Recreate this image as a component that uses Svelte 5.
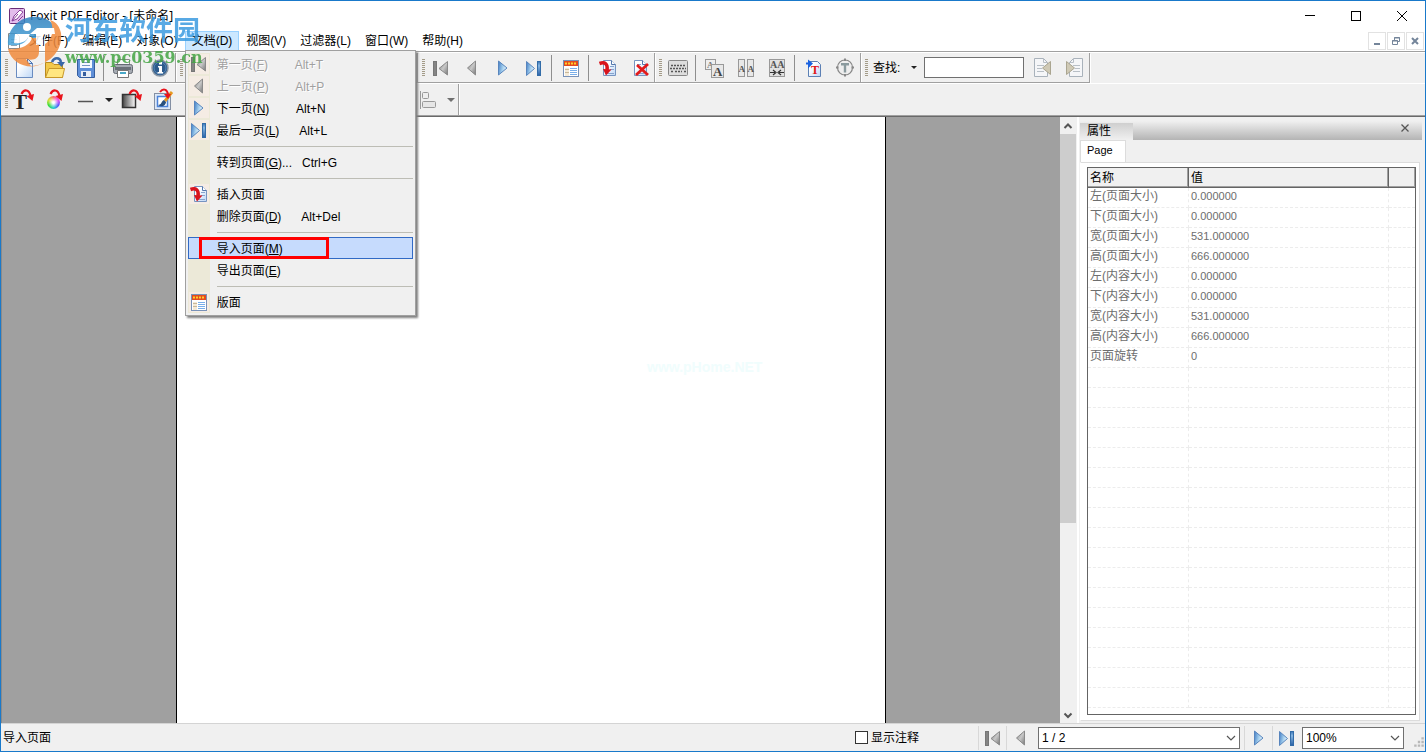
<script>
  const menus = [
    ['文件', 'F'], ['编辑', 'E'], ['对象', 'O'], ['文档', 'D'],
    ['视图', 'V'], ['过滤器', 'L'], ['窗口', 'W'], ['帮助', 'H']
  ];
  const items = [
    { t: '第一页', k: 'F', s: '        Alt+T', icon: 'firstG', off: true },
    { t: '上一页', k: 'P', s: '        Alt+P', icon: 'prevG', off: true },
    { t: '下一页', k: 'N', s: '        Alt+N', icon: 'next' },
    { t: '最后一页', k: 'L', s: '      Alt+L', icon: 'last' },
    null,
    { t: '转到页面', k: 'G', s: '...   Ctrl+G' },
    null,
    { t: '插入页面', icon: 'insert' },
    { t: '删除页面', k: 'D', s: '      Alt+Del' },
    null,
    { t: '导入页面', k: 'M', hot: true },
    { t: '导出页面', k: 'E' },
    null,
    { t: '版面', icon: 'layout' }
  ];
  const props = [
    ['左(页面大小)', '0.000000'], ['下(页面大小)', '0.000000'],
    ['宽(页面大小)', '531.000000'], ['高(页面大小)', '666.000000'],
    ['左(内容大小)', '0.000000'], ['下(内容大小)', '0.000000'],
    ['宽(内容大小)', '531.000000'], ['高(内容大小)', '666.000000'],
    ['页面旋转', '0'],
    ...Array.from({ length: 17 }, () => ['', ''])
  ];
  let notes = $state(false);
  let query = $state('');
</script>

{#snippet redArrow()}
  <path d="M9.500 6C12 1 17 1 18.500 8" fill="none" stroke="#e8141c" stroke-width="2.200" />
  <path d="M14.500 8L22 6L20.500 13Z" fill="#e8141c" />
{/snippet}

{#snippet icon(name)}
  <svg class="ic" viewBox="0 0 24 24" aria-hidden="true">
    {#if name === 'new'}
      <path d="M4.500 2.500H15.500L20.500 7.500V21.500H4.500Z" fill="url(#paper)" stroke="#6a8cc0" />
      <path d="M15.500 2.500V7.500H20.500Z" fill="#d5e5fa" stroke="#4a74b4" />
    {:else if name === 'open'}
      <path d="M2.500 6.500H9L11 8.500H19.500V21.500H2.500Z" fill="#f2c84a" stroke="#b98a20" />
      <path d="M2.500 21.500L6 12.500H21.500L19.500 21.500Z" fill="#ffe680" stroke="#c8982a" />
      <path d="M9 6C11 1 17 1 18 6" fill="none" stroke="#3a68a8" stroke-width="2.500" />
      <path d="M14 6H22L18.500 11Z" fill="#3a68a8" />
    {:else if name === 'save'}
      <path d="M3.500 3.500H20.500V21.500H5.500L3.500 19.500Z" fill="#5f8fd8" stroke="#365e9e" />
      <rect x="6" y="4" width="12" height="8" fill="#f4f8ff" />
      <path d="M8 6.500H16M8 9.500H16" stroke="#7795c4" />
      <rect x="7" y="15" width="10" height="6" fill="#e9eef6" />
      <rect x="9" y="16" width="3" height="4" fill="#365e9e" />
    {:else if name === 'print'}
      <path d="M6.500 9V3.500H18.500V9" fill="#f8f8f8" stroke="#888" />
      <rect x="2.500" y="8.500" width="19" height="9" rx="2" fill="#a5aab2" stroke="#656b74" />
      <rect x="4" y="11" width="16" height="3" fill="#6a7078" />
      <path d="M6.500 14.500H17.500V21.500H6.500Z" fill="#fff" stroke="#777" />
      <rect x="9" y="16" width="6" height="2" fill="#49a8c8" />
    {:else if name === 'info'}
      <circle cx="12" cy="12" r="8" fill="#2d5a8c" stroke="#8a97a5" stroke-width="1.500" />
      <circle cx="12" cy="12" r="6" fill="none" stroke="#5687b7" />
      <path d="M11 6H14V8.500H11ZM10 10H14V16H15V17.500H9.500V16H11V11.500H10Z" fill="#fff" />
    {:else if name === 'firstG'}
      <rect x="4.500" y="5.500" width="3" height="14" fill="#858585" stroke="#777" />
      <path d="M18.500 5.500V19L10 12.500Z" fill="url(#grey)" stroke="#8a8a8a" />
    {:else if name === 'prevG'}
      <path d="M15.500 5V19L7.500 12Z" fill="url(#grey)" stroke="#8a8a8a" />
    {:else if name === 'next'}
      <path d="M7.500 5V19L16 12Z" fill="url(#blue)" stroke="#5885bd" />
    {:else if name === 'last'}
      <path d="M4.500 5.500V19.500L12.500 12.500Z" fill="url(#blue)" stroke="#5885bd" />
      <rect x="15.500" y="5.500" width="3" height="14" fill="url(#bar)" stroke="#326ca8" />
    {:else if name === 'layout'}
      <rect x="4.500" y="4.500" width="15" height="16" fill="#fff" stroke="#7992b8" />
      <rect x="5" y="5" width="14" height="5" fill="#e34a1e" />
      <path d="M6 7.500H18" stroke="#ffd02a" stroke-width="2" stroke-dasharray="2 1" />
      <rect x="6" y="12" width="4" height="8" fill="#f4ead8" />
      <path d="M6 13.500H10M6 16.500H10" stroke="#c9b99a" />
      <path d="M11 12.500H18M11 14.500H18M11 16.500H18M11 18.500H18" stroke="#78aeea" />
    {:else if name === 'insert' || name === 'delete'}
      <path d="M7.500 4.500H15.500L19.500 8.500V19.500H7.500Z" fill="url(#paper)" stroke="#7694c0" />
      <path d="M15.500 4.500V8.500H19.500" fill="#fff" stroke="#5478ac" />
      {#if name === 'insert'}
        <path d="M14 10.500H18M14 13.500H18M9 17.500H18" stroke="#86a4ce" />
        <path d="M3.500 7.500C9 5.500 12 8 11 14" fill="none" stroke="#d8141c" stroke-width="3.500" />
        <path d="M7 13L15.500 13.500L10 19.500Z" fill="#d8141c" />
      {:else}
        <path d="M10 8.500H14M10 17.500H17" stroke="#86a4ce" />
        <path d="M10 9L21 19M21 8L9 19" stroke="#e31b1b" stroke-width="2.800" />
      {/if}
    {:else if name === 'keys'}
      <rect x="2.500" y="4.500" width="19" height="15" rx="1" fill="#ddd" stroke="#888" />
      <path d="M5 9.500H19M4 12.500H20M5 15.500H7M9 15.500H16M18 15.500H20" stroke="#555" stroke-width="1.500" stroke-dasharray="2 1" />
    {:else if name === 'aaStep'}
      <rect x="2.500" y="3.500" width="10" height="10" fill="#eee" stroke="#999" />
      <text x="4" y="12" font-size="9" fill="#777">A</text>
      <rect x="8.500" y="8.500" width="12" height="13" fill="#e8e8e8" stroke="#999" />
      <text x="10" y="20" font-size="13" fill="#444">A</text>
    {:else if name === 'aaSplit'}
      <rect x="4.500" y="3.500" width="6" height="17" fill="#e8e8e8" stroke="#999" />
      <rect x="13.500" y="3.500" width="6" height="17" fill="#e8e8e8" stroke="#999" />
      <text x="4.500" y="16" font-size="9" fill="#555">A</text>
      <text x="13.500" y="16" font-size="9" fill="#555">A</text>
    {:else if name === 'aaMerge'}
      <rect x="4.500" y="3.500" width="15" height="17" fill="#e0e0e0" stroke="#999" />
      <text x="5" y="12" font-size="10" fill="#555">AA</text>
      <path d="M5 16.500H10M19 16.500H14M8 14L11 16.500L8 19M16 14L13 16.500L16 19" fill="none" stroke="#333" stroke-width="1.200" />
    {:else if name === 'pageT'}
      <path d="M6.500 5.500H15.500L18.500 8.500V20.500H6.500Z" fill="url(#paper)" stroke="#5c80b4" />
      <path d="M4 7.500H8M7 5.500L9.500 7.500L7 10Z" fill="#1a62e0" stroke="#1a62e0" stroke-width="2" />
      <text x="9" y="18" font-size="12" fill="#e01616">T</text>
    {:else if name === 'circleT'}
      <circle cx="12" cy="11.500" r="7.500" fill="#eee" stroke="#888" stroke-width="1.200" />
      <path d="M12 2.500V5M12 18V20.500M3 11.500H5.500M18.500 11.500H21" stroke="#888" stroke-width="2" />
      <path d="M8 7H16V9.500H13.200V16.500H10.800V9.500H8Z" fill="#8a9a9e" />
    {:else if name === 'findPrev' || name === 'findNext'}
      <g transform={name === 'findNext' ? 'translate(24 0) scale(-1 1)' : undefined}>
        <path d="M3.500 2.500H12.500L16.500 6.500V20.500H3.500Z" fill="#f5f6f8" stroke="#a9b2bb" />
        <path d="M12.500 2.500V6.500H16.500M6 9.500H13M6 12.500H11M6 15.500H13" fill="none" stroke="#b8bfc6" />
        <path d="M19.500 5.500V18.500L11.500 12Z" fill="#cfc9b5" stroke="#aaa590" />
      </g>
    {:else if name === 'text'}
      <text x="1" y="21" font-size="21" fill="#222">T</text>
      {@render redArrow()}
    {:else if name === 'align'}
      <path d="M4.500 3V21" stroke="#999" />
      <rect x="6.500" y="4.500" width="6" height="6" rx="1" fill="#eee" stroke="#999" />
      <rect x="6.500" y="13.500" width="13" height="6" rx="1" fill="#e6e6e6" stroke="#999" />
    {:else if name === 'line'}
      <path d="M4 13.500H19" stroke="#555" stroke-width="1.500" />
    {:else if name === 'gradient'}
      <rect x="2.500" y="6.500" width="13" height="13" fill="url(#fade)" stroke="#333" stroke-width="1.500" />
      {@render redArrow()}
    {:else if name === 'image'}
      <rect x="3.500" y="5.500" width="16" height="16" fill="#dce8f8" stroke="#8490a4" />
      <rect x="6.500" y="8.500" width="10" height="10" fill="#fff" stroke="#4c83d8" stroke-width="1.500" />
      <path d="M21 4L14 13" stroke="#e49a22" stroke-width="3" />
      <path d="M13 12C10 13 11 17 7 17C11 20 15 17 15 14Z" fill="#28507e" />
      <path d="M9 4C12 0 16 1 17 6" fill="none" stroke="#e8141c" stroke-width="2" />
      <path d="M13 6H20L17 11Z" fill="#e8141c" />
    {/if}
  </svg>
{/snippet}

{#snippet tool(name, label)}
  <button class="tool" aria-label={label}>
    {#if name === 'color'}
      <span class="wheel"></span>
      <svg class="ic over" viewBox="0 0 24 24" aria-hidden="true">{@render redArrow()}</svg>
    {:else}
      {@render icon(name)}
    {/if}
  </button>
{/snippet}

<svg class="defs" aria-hidden="true">
  <defs>
    <linearGradient id="paper" x1="0" y1="0" x2="1" y2="1"><stop offset="0.300" stop-color="#fff" /><stop offset="1" stop-color="#bcd6f6" /></linearGradient>
    <linearGradient id="grey" x1="0" y1="0" x2="1" y2="1"><stop offset="0" stop-color="#777" /><stop offset="0.500" stop-color="#c8c8c8" /><stop offset="1" stop-color="#777" /></linearGradient>
    <linearGradient id="blue" x1="0" y1="0" x2="1" y2="0.300"><stop offset="0" stop-color="#3f7cc4" /><stop offset="0.600" stop-color="#a6d0ee" /><stop offset="1" stop-color="#e2f2fc" /></linearGradient>
    <linearGradient id="bar" x1="0" y1="0" x2="0" y2="1"><stop offset="0" stop-color="#3b74b6" /><stop offset="0.300" stop-color="#86b6e2" /><stop offset="1" stop-color="#2a60a6" /></linearGradient>
    <linearGradient id="fade"><stop offset="0" stop-color="#444" /><stop offset="1" stop-color="#fff" /></linearGradient>
    <linearGradient id="sky" x1="0" y1="0" x2="0" y2="1"><stop offset="0" stop-color="#2f80bd" /><stop offset="1" stop-color="#48a8de" /></linearGradient>
  </defs>
</svg>

<div class="window">
  <header class="title">
    <svg class="app" viewBox="0 0 16 16" aria-hidden="true">
      <rect x=".5" y=".5" width="15" height="15" rx="1" fill="#e3bdec" stroke="#6a2d78" />
      <path d="M3 13L5 8L11 2L14 4L8 11Z" fill="#fff" stroke="#8a3f9c" />
      <path d="M3 13L9 6M9 13L14 8" stroke="#8a3f9c" />
    </svg>
    <span class="name">Foxit PDF Editor - [未命名]</span>
    <button class="win" aria-label="最小化"><svg viewBox="0 0 12 12"><path d="M1 5.500H11" stroke="#000" /></svg></button>
    <button class="win" aria-label="最大化"><svg viewBox="0 0 12 12"><rect x="1.500" y="1.500" width="9" height="9" fill="none" stroke="#000" /></svg></button>
    <button class="win" aria-label="关闭"><svg viewBox="0 0 12 12"><path d="M1 1L11 11M11 1L1 11" stroke="#000" /></svg></button>
  </header>

  <nav class="menubar">
    <svg class="doc" viewBox="0 0 16 16" aria-hidden="true"><path d="M2.500 .5H10.500L13.500 3.500V15.500H2.500Z" fill="#fff" stroke="#888" /><path d="M5 6.500H11M5 9.500H11M5 12.500H11" stroke="#aaa" /></svg>
    {#each menus as [t, k]}
      <div class="entry">
        <button class="top" class:open={k === 'D'}>{t}({k})</button>
        {#if k === 'D'}
          <div class="drop" role="menu">
            {#each items as it}
              {#if it}
                <button class="item" class:hot={it.hot} role="menuitem" disabled={it.off}>
                  <span class="gut">{#if it.icon}<span class="chip">{@render icon(it.icon)}</span>{/if}</span>
                  <span class="lab">{it.t}{#if it.k}(<u>{it.k}</u>){/if}{it.s ?? ''}</span>
                  {#if it.hot}<i class="mark"></i>{/if}
                </button>
              {:else}
                <div class="rule" role="separator"></div>
              {/if}
            {/each}
          </div>
        {/if}
      </div>
    {/each}
    <div class="mdi">
      <button aria-label="最小化文档"><svg viewBox="0 0 10 10"><path d="M2 8H8" stroke="#74859a" stroke-width="2" /></svg></button>
      <button aria-label="还原文档"><svg viewBox="0 0 10 10"><path d="M1.500 4.500H6.500V8.500H1.500ZM3.500 4V1.500H8.500V5.500H7M1 5H7M3 2H9" fill="none" stroke="#74859a" /></svg></button>
      <button aria-label="关闭文档"><svg viewBox="0 0 10 10"><path d="M2 2L8 8M8 2L2 8" stroke="#74859a" stroke-width="2" /></svg></button>
    </div>
  </nav>

  <div class="tools">
    <div class="row">
      <div class="band">
        <i class="grip"></i>
        {@render tool('new', '新建')}{@render tool('open', '打开')}{@render tool('save', '保存')}
        <i class="sep"></i>{@render tool('print', '打印')}<i class="sep"></i>{@render tool('info', '信息')}
      </div>
      <div class="band covered"><i class="grip"></i></div>
      <div class="band">
        <i class="grip"></i>
        {@render tool('firstG', '第一页')}{@render tool('prevG', '上一页')}{@render tool('next', '下一页')}{@render tool('last', '最后一页')}
        <i class="sep"></i>{@render tool('layout', '版面')}<i class="sep"></i>
        {@render tool('insert', '插入页面')}{@render tool('delete', '删除页面')}
      </div>
      <div class="band">
        <i class="grip"></i>
        {@render tool('keys', '键盘')}<i class="sep"></i>
        {@render tool('aaStep', '文字')}{@render tool('aaSplit', '拆分')}{@render tool('aaMerge', '合并')}
        <i class="sep"></i>{@render tool('pageT', '导入文本')}{@render tool('circleT', '文本对象')}
      </div>
      <div class="band find">
        <i class="grip"></i>
        <label for="find">查找:</label>
        <button class="caret" aria-label="查找选项"></button>
        <input id="find" type="text" bind:value={query} />
        {@render tool('findPrev', '查找上一个')}{@render tool('findNext', '查找下一个')}
      </div>
    </div>
    <div class="row second">
      <div class="band">
        <i class="grip"></i>
        {@render tool('text', '添加文本')}{@render tool('color', '颜色')}{@render tool('line', '线型')}
        <button class="caret" aria-label="线型选项"></button>
        {@render tool('gradient', '渐变')}{@render tool('image', '图像')}
        <i class="hidden"></i>
        {@render tool('align', '对齐')}
        <button class="caret dim" aria-label="对齐选项"></button>
      </div>
    </div>
  </div>

  <main>
    <section class="canvas">
      <div class="sheet"><span class="faint">www.pHome.NET</span></div>
    </section>
    <div class="scroll">
      <button aria-label="向上滚动"><svg viewBox="0 0 10 10"><path d="M1.500 7L5 3.500L8.500 7" /></svg></button>
      <div class="track"><i></i></div>
      <button aria-label="向下滚动"><svg viewBox="0 0 10 10"><path d="M1.500 3.500L5 7L8.500 3.500" /></svg></button>
    </div>
    <aside>
      <div class="cap"><h2>属性</h2><button aria-label="关闭面板"><svg viewBox="0 0 10 10"><path d="M1.500 1.500L8.500 8.500M8.500 1.500L1.500 8.500" stroke="#555" stroke-width="1.300" /></svg></button></div>
      <div class="tabs"><button class="tab">Page</button></div>
      <div class="pane">
        <div class="grid">
          <table>
            <colgroup><col class="c1" /><col class="c2" /><col /></colgroup>
            <thead><tr><th>名称</th><th>值</th><th></th></tr></thead>
            <tbody>
              {#each props as [n, v]}
                <tr><td>{n}</td><td class="val">{v}</td><td></td></tr>
              {/each}
            </tbody>
          </table>
        </div>
      </div>
    </aside>
  </main>

  <footer>
    <span class="msg">导入页面</span>
    <label class="check"><input type="checkbox" bind:checked={notes} />显示注释</label>
    <button class="nav" aria-label="第一页">{@render icon('firstG')}</button>
    <button class="nav" aria-label="上一页">{@render icon('prevG')}</button>
    <div class="pick wide"><select aria-label="页码"><option>1 / 2</option><option>2 / 2</option></select><svg viewBox="0 0 10 10"><path d="M1 3L5 7L9 3" /></svg></div>
    <button class="nav" aria-label="下一页">{@render icon('next')}</button>
    <button class="nav" aria-label="最后一页">{@render icon('last')}</button>
    <div class="pick"><select aria-label="缩放"><option>100%</option><option>150%</option></select><svg viewBox="0 0 10 10"><path d="M1 3L5 7L9 3" /></svg></div>
    <svg class="size" viewBox="0 0 10 10" aria-hidden="true"><path d="M7 1h2v2h-2zM7 4h2v2h-2zM7 7h2v2h-2zM4 4h2v2h-2zM4 7h2v2h-2zM1 7h2v2h-2z" fill="#b8b8b8" /></svg>
  </footer>

  <div class="brand" aria-hidden="true">
    <svg viewBox="0 0 60 60">
      <path d="M3 36C2 16 20 4 38 9C46 11 51 18 53 24C47 19 39 17 35 24L33 41H27V28L23 27C23 32 17 38 3 36Z" fill="url(#sky)" />
      <path d="M3 40C16 41 25 36 27 29H34V43C34 50 28 52 21 50L26 57C44 56 58 42 56 24C54 15 49 12 45 11C50 20 47 31 40 35V53C28 62 7 57 3 40Z" fill="#f08a3c" />
      <path d="M10 25H25L22 30C20 33 14 35 9 34ZM32 19H49L50 25H38V36H31V25H25Z" fill="#fff" />
      <circle cx="22" cy="18" r="4" fill="#fff" />
    </svg>
    <div class="words"><b>河东软件园</b><em>www.pc0359.cn</em></div>
  </div>
</div>

<style>
  :global(body) { margin: 0; }
  .window, .window button, .window input, .window select {
    font-family: "Liberation Sans", "Noto Sans CJK SC", sans-serif;
    font-size: 12px;
    color: #000;
  }
  .window {
    position: relative;
    box-sizing: border-box;
    height: 100vh;
    display: flex;
    flex-direction: column;
    border: 1px solid #1979ca;
    background: #f0f0f0;
    line-height: 16px;
    overflow: hidden;
  }
  .window * { box-sizing: border-box; }
  .defs { position: absolute; width: 0; height: 0; }
  button { border: 0; padding: 0; background: none; }
  .ic { width: 24px; height: 24px; display: block; flex: none; }
  .ic text { font-family: "Liberation Serif", serif; font-weight: bold; }

  .title { display: flex; align-items: center; height: 29px; background: #fff; padding-left: 8px; flex: none; }
  .app { width: 16px; height: 16px; }
  .name { margin-left: 5px; flex: 1; font-family: "Noto Sans", "Noto Sans CJK SC", sans-serif; }
  .win { width: 46px; height: 28px; display: grid; place-items: center; }
  .win svg { width: 12px; height: 12px; }

  .menubar { display: flex; height: 21px; background: #fff; flex: none; padding-left: 5px; }
  .doc { width: 16px; height: 16px; align-self: center; }
  .entry { position: relative; display: flex; }
  .top { height: 20px; margin-top: 1px; padding: 0 6px; border: 1px solid transparent; line-height: 18px; white-space: nowrap; }
  .top.open { background: #cce8ff; border-color: #99d1ff; border-bottom-color: #cce8ff; }
  .mdi { display: flex; gap: 1px; margin-left: auto; padding-top: 2px; padding-right: 1px; }
  .mdi button { width: 18px; height: 18px; border: 1px solid #e2e2e2; display: grid; place-items: center; }
  .mdi svg { width: 10px; height: 10px; }

  .drop {
    position: absolute; left: 0; top: 20px; z-index: 5; width: 231px;
    border: 1px solid #a0a0a0; padding: 2px;
    background: #f0f0f0; box-shadow: 2px 2px 2px #808080;
  }
  .item { position: relative; display: flex; width: 100%; height: 22px; align-items: center; text-align: left; }
  .gut { width: 22px; height: 22px; background: #ece9d8; display: grid; place-items: center; flex: none; }
  .chip { width: 20px; height: 20px; background: #f5ece4; display: grid; place-items: center; }
  .chip .ic { width: 24px; height: 24px; margin: -2px; }
  .lab { margin-left: 7px; padding-bottom: 2px; white-space: pre; }
  .item:disabled .lab { color: #a0a0a0; text-shadow: 1px 1px #fff; }
  .item.hot { background: #c6dbfd; outline: 1px solid #316ac5; outline-offset: -1px; }
  .hot .gut { background: none; }
  .mark { position: absolute; left: 11px; top: 0; width: 130px; height: 22px; border: 3px solid #f00; }
  .rule { height: 10px; background: linear-gradient(#ece9d8, #ece9d8) left / 22px 100% no-repeat; display: flex; align-items: center; padding-left: 29px; }
  .rule::after { content: ""; height: 1px; flex: 1; background: #bdbdb5; }

  .tools { flex: none; border-top: 1px solid #a0a0a0; border-bottom: 1px solid #696969; }
  .row { display: flex; height: 31px; border-top: 1px solid #fff; }
  .row.second { height: 33px; border-bottom: 1px solid #a0a0a0; }
  .band { display: flex; align-items: center; border-right: 1px solid #a0a0a0; border-bottom: 1px solid #a0a0a0; box-shadow: 1px 1px #fff; }
  .second .band { border-bottom: 0; box-shadow: 1px 0 #fff; }
  .covered { width: 242px; }
  .hidden { width: 234px; }
  .grip { width: 3px; height: 18px; margin-left: 4px; background: repeating-linear-gradient(#a39b88 0 1px, transparent 1px 2px); }
  .tool { position: relative; width: 31px; height: 28px; display: grid; place-items: center; }
  .sep { width: 1px; height: 26px; margin: 0 3px 0 2px; background: #8e8e8e; }
  .caret { width: 15px; height: 20px; display: grid; place-items: center; }
  .caret::after { content: ""; border: 4px solid transparent; border-top-color: #222; border-bottom: 0; }
  .caret.dim::after { border-top-color: #707070; }
  .over { position: absolute; left: 2px; top: 2px; }
  .wheel { width: 13px; height: 13px; margin-top: 5px; margin-right: 3px; border-radius: 50%; background: radial-gradient(#fff 10%, transparent 60%), conic-gradient(#f66, #e4e, #55f, #2cc, #3d3, #dd3, #f66); }
  .find label { margin-left: 5px; }
  .find .caret { margin: 0 3px 0 6px; }
  .find .caret::after { border-width: 3px 3px 0; }
  .find input { width: 100px; height: 21px; border: 1px solid #707070; background: #fff; padding: 0 3px; margin-right: 3px; }

  main { flex: 1; display: flex; min-height: 0; }
  .canvas { flex: 1; display: flex; justify-content: center; background: #a0a0a0; border-left: 1px solid #8a8a8a; }
  .sheet { width: 710px; background: #fff; border: solid #000; border-width: 0 1px; padding: 242px 0 0 470px; }
  .faint { color: #f0fdfd; font-size: 14px; font-weight: bold; }
  .scroll { width: 16px; display: flex; flex-direction: column; }
  .scroll button { height: 17px; display: grid; place-items: center; }
  .scroll svg { width: 10px; height: 10px; fill: none; stroke: #555; stroke-width: 2; }
  .track { flex: 1; }
  .track i { display: block; height: 68%; background: #cdcdcd; }

  aside { width: 348px; display: flex; flex-direction: column; border-left: 2px solid #fff; padding: 4px 3px 2px 1px; margin-left: 1px; }
  .cap { display: flex; justify-content: space-between; height: 19px; background: linear-gradient(#f0f0f0, #b4b4b4); }
  .cap h2 { margin: 2px 0 0; width: 53px; height: 17px; padding-left: 7px; font-size: 12px; font-weight: normal; line-height: 17px; background: linear-gradient(#cfcfcf, #f0f0f0); }
  .cap button { width: 34px; display: grid; place-items: center; padding-bottom: 6px; }
  .cap svg { width: 10px; height: 10px; }
  .tabs { height: 22px; display: flex; }
  .window .tab { height: 22px; width: 46px; background: #fff; border: 1px solid #dcdcdc; border-bottom: 0; font-size: 11px; padding: 0 4px 3px 6px; text-align: left; }
  .pane { flex: 1; display: flex; min-height: 0; margin-right: 2px; background: #fff; border: 1px solid #dcdcdc; border-left-color: #fff; padding: 4px 3px 5px 6px; }
  .grid { flex: 1; overflow: hidden; border: 1px solid #646464; }
  table { width: 100%; table-layout: fixed; border-collapse: separate; border-spacing: 0; }
  .c1 { width: 101px; }
  .c2 { width: 200px; }
  th { height: 20px; padding: 0 2px; background: #f0f0f0; border-right: 1px solid #646464; border-bottom: 1px solid #646464; box-shadow: inset -1px -1px #a0a0a0; text-align: left; font-weight: normal; line-height: 18px; }
  th:last-child { border-right: 0; }
  td { height: 20px; padding: 0 2px 2px; color: #6d6d6d; line-height: 17px; white-space: nowrap; border-right: 1px dashed #ececec; border-bottom: 1px dashed #ececec; }
  td:last-child { border-right: 0; }
  .val { font-size: 11px; }

  footer { display: flex; align-items: center; height: 28px; flex: none; border-top: 1px solid #d4d4d4; padding-left: 2px; }
  .msg { flex: 1; }
  .check { display: flex; align-items: center; margin-right: 59px; }
  .check input { appearance: none; width: 13px; height: 13px; margin: 0 3px 0 0; border: 1px solid #333; background: #fff; }
  .check input:checked { background: #333; }
  .nav { width: 28px; height: 24px; display: grid; place-items: center; border-left: 1px solid #d8d8d8; }
  .pick { position: relative; width: 102px; height: 22px; margin: 0 2px; }
  .pick.wide { width: 202px; margin: 0 4px; }
  .pick select { appearance: none; width: 100%; height: 22px; border: 1px solid #707070; border-radius: 0; background: #fff; padding: 0 3px; }
  .pick svg { position: absolute; right: 4px; top: 6px; width: 10px; height: 10px; fill: none; stroke: #555; stroke-width: 1.2; pointer-events: none; }
  .size { width: 12px; height: 12px; margin: 8px 0 0 7px; }

  .brand { position: absolute; left: 4px; top: 8px; z-index: 6; display: flex; opacity: .85; pointer-events: none; }
  .brand svg { width: 60px; height: 60px; }
  .words { display: flex; flex-direction: column; white-space: nowrap; }
  .words b { font: bold 27px/40px "Noto Sans CJK SC", sans-serif; color: #3b9be0; }
  .words em { font: bold 16px/18px "DejaVu Serif", serif; color: #44a544; }
</style>
